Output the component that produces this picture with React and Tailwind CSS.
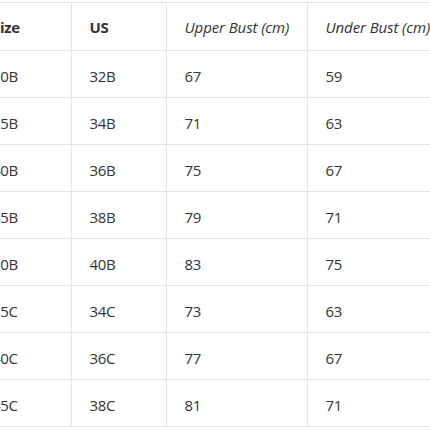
export default function App() {
  const rows = [
    ["30B", "32B", "67", "59"],
    ["35B", "34B", "71", "63"],
    ["40B", "36B", "75", "67"],
    ["45B", "38B", "79", "71"],
    ["50B", "40B", "83", "75"],
    ["35C", "34C", "73", "63"],
    ["40C", "36C", "77", "67"],
    ["45C", "38C", "81", "71"],
  ];
  return (
    <div className="w-[430px] h-[430px] overflow-hidden bg-white pt-[2px]" style={{ fontFamily: '"Open Sans", "Noto Sans", sans-serif' }}>
      <table className="ml-[-26px] border-collapse table-fixed w-[600px] text-[15px] text-[#333] whitespace-nowrap tracking-[-0.3px]">
        <colgroup>
          <col className="w-[97px]" />
          <col className="w-[95px]" />
          <col className="w-[141px]" />
          <col className="w-[267px]" />
        </colgroup>
        <thead>
          <tr className="border-t border-b border-[#e6e6e6]">
            <th className="h-[48px] px-[18px] pt-[2px] text-left font-bold border-r border-[#e6e6e6]">Size</th>
            <th className="h-[48px] px-[18px] pt-[2px] text-left font-bold border-r border-[#e6e6e6]">US</th>
            <th className="h-[48px] px-[18px] pt-[2px] text-left font-normal italic border-r border-[#e6e6e6] tracking-[-0.1px]">Upper Bust (cm)</th>
            <th className="h-[48px] px-[18px] pt-[2px] text-left font-normal italic tracking-[-0.1px]">Under Bust (cm)</th>
          </tr>
        </thead>
        <tbody>
          {rows.map((r, i) => (
            <tr key={i} className="border-b border-[#e6e6e6]">
              {r.map((c, j) => (
                <td key={j} className={"h-[47px] px-[18px] pt-[4px] text-left " + (j < 3 ? "border-r border-[#e6e6e6]" : "")}>{c}</td>
              ))}
            </tr>
          ))}
        </tbody>
      </table>
    </div>
  );
}
